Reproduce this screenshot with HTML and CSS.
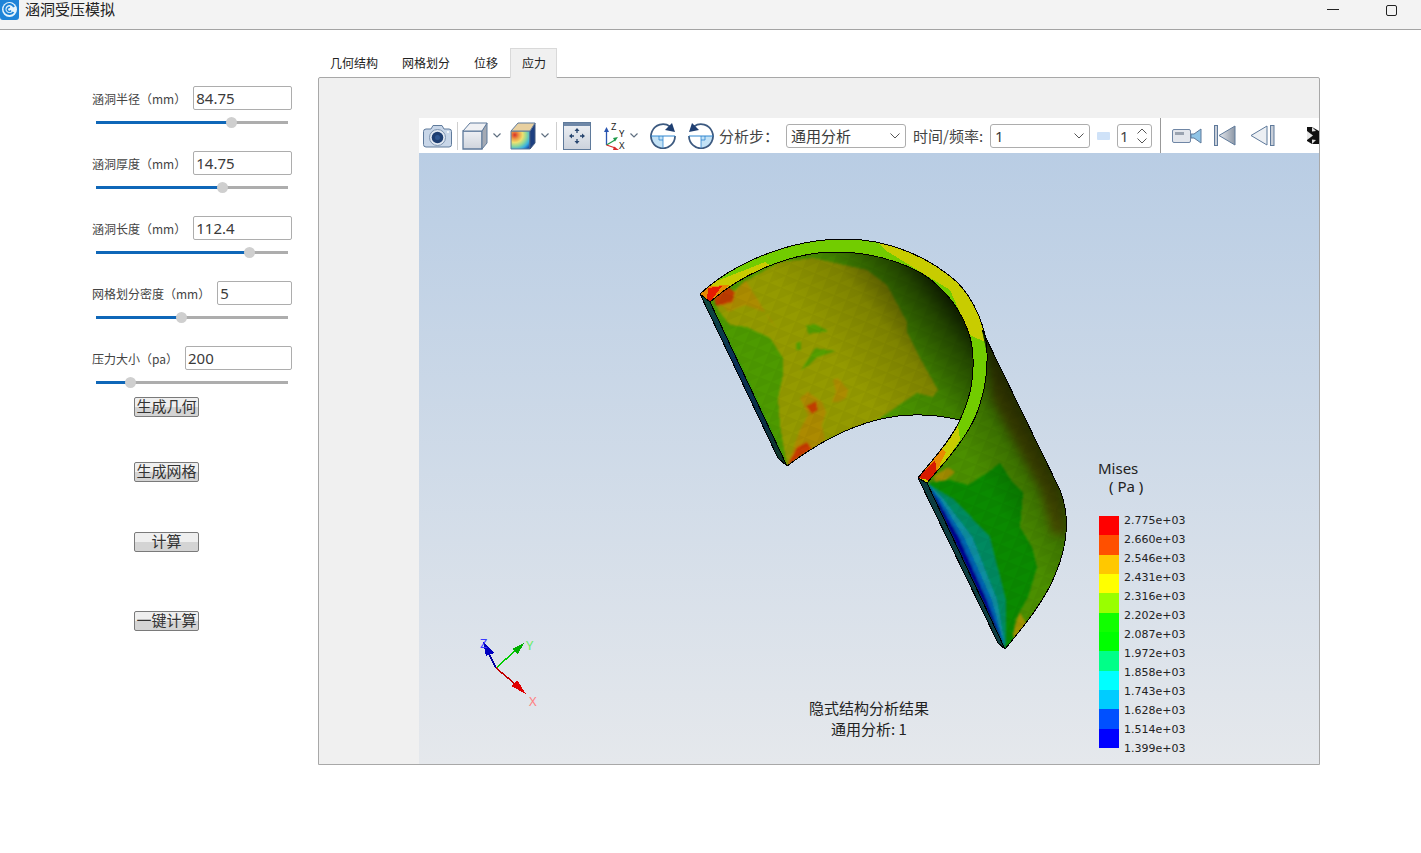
FILE: index.html
```html
<!DOCTYPE html>
<html lang="zh">
<head>
<meta charset="utf-8">
<title>涵洞受压模拟</title>
<link rel="stylesheet" href="styles.css">
</head>
<body>
<header class="titlebar">
  <div class="title-left">
    <svg class="app-icon" width="19" height="20" viewBox="0 0 19 20"><rect x="0" y="-4" width="19" height="24" rx="3" fill="#1f84d8"/><circle cx="9.500" cy="9.500" r="7.500" fill="#e6f4fc"/><path d="M13.500 12a5 5 0 1 1 .5-5" fill="none" stroke="#1f84d8" stroke-width="2"/><path d="M11 10.500a2 2 0 1 1-1-3" fill="none" stroke="#1f84d8" stroke-width="1.500"/></svg>
    <span class="app-title">涵洞受压模拟</span>
  </div>
  <div class="win-controls">
    <span class="win-min"></span>
    <span class="win-max"></span>
  </div>
</header>
<main class="main">
  <aside class="sidebar">
    <div class="param">
      <div class="param-head"><label class="param-label">涵洞半径（mm）</label><div class="field">84.75</div></div>
      <div class="slider"><div class="slider-fill" style="width:70.8%"></div><div class="slider-thumb" style="left:70.8%"></div></div>
    </div>
    <div class="param">
      <div class="param-head"><label class="param-label">涵洞厚度（mm）</label><div class="field">14.75</div></div>
      <div class="slider"><div class="slider-fill" style="width:66.1%"></div><div class="slider-thumb" style="left:66.1%"></div></div>
    </div>
    <div class="param">
      <div class="param-head"><label class="param-label">涵洞长度（mm）</label><div class="field">112.4</div></div>
      <div class="slider"><div class="slider-fill" style="width:79.7%"></div><div class="slider-thumb" style="left:79.7%"></div></div>
    </div>
    <div class="param">
      <div class="param-head"><label class="param-label">网格划分密度（mm）</label><div class="field">5</div></div>
      <div class="slider"><div class="slider-fill" style="width:44.3%"></div><div class="slider-thumb" style="left:44.3%"></div></div>
    </div>
    <div class="param param-last">
      <div class="param-head"><label class="param-label">压力大小（pa）</label><div class="field">200</div></div>
      <div class="slider"><div class="slider-fill" style="width:18.2%"></div><div class="slider-thumb" style="left:18.2%"></div></div>
    </div>
    <button class="btn btn-geo">生成几何</button>
    <button class="btn btn-mesh">生成网格</button>
    <button class="btn btn-calc">计算</button>
    <button class="btn btn-all">一键计算</button>
  </aside>

  <section class="workspace">
    <nav class="tabs">
      <span class="tab">几何结构</span>
      <span class="tab">网格划分</span>
      <span class="tab">位移</span>
      <span class="tab tab-active">应力</span>
    </nav>
    <div class="pane">
      <div class="viewer">
        <div class="toolbar">
          <svg class="ti ti-camera" width="29" height="24" viewBox="0 0 29 24"><path d="M3 5h5l2-3.500h9L21 5h5q2.500 0 2.500 2.500v13q0 2.500-2.500 2.500H3Q.5 23 .5 20.500v-13Q.5 5 3 5z" fill="#c8d6e8" stroke="#5f7a9b"/><circle cx="14.500" cy="13.500" r="8" fill="#e3eaf3" stroke="#7d93af"/><circle cx="14.500" cy="13.500" r="5.800" fill="#1f3f72"/><circle cx="14.500" cy="13.500" r="2.500" fill="#2f5690"/><circle cx="25" cy="8" r="1" fill="#fff"/></svg>
          <span class="tsep tsep-a"></span>
          <svg class="ti ti-cube" width="26" height="28" viewBox="0 0 26 28"><defs><linearGradient id="cf" x1="0" y1="0" x2="0" y2="1"><stop offset="0" stop-color="#eef0f4"/><stop offset="1" stop-color="#cfd4dc"/></linearGradient></defs><path d="M1 9h19v18H1z" fill="url(#cf)" stroke="#5f7a9b" stroke-width="1.300"/><path d="M20 9v18l5-6V1z" fill="#a4aab4" stroke="#5f7a9b"/><path d="M1 9 8 1h17l-5 8z" fill="#f0f1f4" stroke="#5f7a9b"/></svg>
          <svg class="ti ti-chev-a" width="8" height="5" viewBox="0 0 8 5"><path d="M.5.5 4 4 7.500.5" fill="none" stroke="#5f6f80" stroke-width="1.200"/></svg>
          <svg class="ti ti-ccube" width="26" height="28" viewBox="0 0 26 28"><defs><radialGradient id="cg" cx=".2" cy=".22" r="1"><stop offset="0" stop-color="#d8322a"/><stop offset=".22" stop-color="#ee9a45"/><stop offset=".42" stop-color="#eee070"/><stop offset=".62" stop-color="#8fd89a"/><stop offset=".82" stop-color="#3ab0e0"/><stop offset="1" stop-color="#1d55b0"/></radialGradient></defs><path d="M1 9h19v18H1z" fill="url(#cg)" stroke="#5f7a9b"/><path d="M20 9v18l5-6V1z" fill="#1d3f80" stroke="#40587f"/><path d="M1 9 8 1h17l-5 8z" fill="#e8d0a0" stroke="#5f7a9b"/></svg>
          <svg class="ti ti-chev-b" width="8" height="5" viewBox="0 0 8 5"><path d="M.5.5 4 4 7.500.5" fill="none" stroke="#5f6f80" stroke-width="1.200"/></svg>
          <span class="tsep tsep-b"></span>
          <svg class="ti ti-fit" width="28" height="28" viewBox="0 0 28 28"><defs><linearGradient id="ff" x1="0" y1="0" x2="0" y2="1"><stop offset="0" stop-color="#eef1f5"/><stop offset="1" stop-color="#ccd2dc"/></linearGradient></defs><rect x=".5" y=".5" width="27" height="27" fill="url(#ff)" stroke="#5f7a9b"/><rect x="1" y="1" width="26" height="3" fill="#6f88a8"/><path d="M14 11V8M14 17v3M11 14H8M17 14h3" stroke="#27456f" stroke-width="1.300"/><path d="M14 6l-2.500 3h5zM14 22l-2.500-3h5zM6 14l3-2.500v5zM22 14l-3-2.500v5z" fill="#27456f"/></svg>
          <svg class="ti ti-axes" width="24" height="34" viewBox="0 -2 24 34"><path d="M3.500 24V10" stroke="#2a55b0" stroke-width="1.300"/><path d="M3.500 6 1 11h5z" fill="#2a55b0"/><path d="M3.500 24 12 19" stroke="#1f9a4a" stroke-width="1.300"/><path d="M15 16l-5 1 2 3.500z" fill="#1f9a4a"/><path d="M3.500 24l9 3" stroke="#d92a2a" stroke-width="1.300"/><path d="M16 29l-5-3.500-1 3.500z" fill="#d92a2a"/><text class="axis-letter" x="8" y="8.500">Z</text><text class="axis-letter" x="16" y="16">Y</text><text class="axis-letter" x="16" y="28">X</text></svg>
          <svg class="ti ti-chev-c" width="8" height="5" viewBox="0 0 8 5"><path d="M.5.5 4 4 7.500.5" fill="none" stroke="#5f6f80" stroke-width="1.200"/></svg>
          <svg class="ti ti-rot-a" width="26" height="26" viewBox="0 0 26 26"><path d="M13 13H1A12 12 0 0 0 13 25z" fill="#c3e2f6"/><path d="M20 3.500A12 12 0 1 0 25 13" fill="none" stroke="#3d5a80" stroke-width="1.800"/><path d="M25 9 15 7l7-7z" fill="#1f3f72"/><path d="M1 13h24" stroke="#2f86d0"/><path d="M13 13v12M13 17H9v-4" fill="none" stroke="#2f86d0" stroke-width=".8"/></svg>
          <svg class="ti ti-rot-b" width="26" height="26" viewBox="0 0 26 26"><path d="M13 13h12A12 12 0 0 1 13 25z" fill="#c3e2f6"/><path d="M6 3.500A12 12 0 1 1 1 13" fill="none" stroke="#3d5a80" stroke-width="1.800"/><path d="M1 9l10-2-7-7z" fill="#1f3f72"/><path d="M1 13h24" stroke="#2f86d0"/><path d="M13 13v12M13 17h4v-4" fill="none" stroke="#2f86d0" stroke-width=".8"/></svg>
          <span class="tlabel tlabel-step">分析步：</span>
          <div class="combo combo-step"><span>通用分析</span><svg width="10" height="6" viewBox="0 0 10 6"><path d="M.5.5 5 5 9.500.5" fill="none" stroke="#555"/></svg></div>
          <span class="tlabel tlabel-time">时间/频率:</span>
          <div class="combo combo-time"><span>1</span><svg width="10" height="6" viewBox="0 0 10 6"><path d="M.5.5 5 5 9.500.5" fill="none" stroke="#555"/></svg></div>
          <span class="mini-bar"></span>
          <div class="spin"><span>1</span><span class="spin-arrows"><svg width="10" height="6" viewBox="0 0 10 6"><path d="M.5 5.500 5 1l4.500 4.500" fill="none" stroke="#555"/></svg><svg width="10" height="6" viewBox="0 0 10 6"><path d="M.5.5 5 5 9.500.5" fill="none" stroke="#555"/></svg></span></div>
          <span class="tsep-full"></span>
          <svg class="ti ti-video" width="30" height="16" viewBox="0 0 30 16"><rect x=".5" y="1.500" width="18" height="13" rx="1.500" fill="#e3e6ec" stroke="#6f86a5"/><rect x="3" y="4" width="9" height="3" fill="#9aa3b0"/><path d="M19 6h3l7-5v14l-7-5h-3z" fill="#8fc4e6" stroke="#5f7a9b"/></svg>
          <svg class="ti ti-first" width="22" height="21" viewBox="0 0 22 21"><defs><linearGradient id="fg" x1="0" y1="0" x2="1" y2="0"><stop offset="0" stop-color="#e6e9ee"/><stop offset="1" stop-color="#8c97a6"/></linearGradient></defs><rect x=".5" y=".5" width="3" height="20" fill="#c8ced8" stroke="#5f7a9b"/><path d="M21 1v19L5 10.500z" fill="url(#fg)" stroke="#5f7a9b"/></svg>
          <svg class="ti ti-prev" width="25" height="21" viewBox="0 0 25 21"><path d="M17 1v19L1 10.500z" fill="#eceff3" stroke="#5f7a9b"/><rect x="20.500" y=".5" width="3.500" height="20" fill="#c8ced8" stroke="#5f7a9b"/></svg>
          <svg class="ti ti-play" width="12" height="17" viewBox="0 0 12 17"><path d="M0 0h5l7 4v13H5L0 14z" fill="#111"/><path d="M0 4l6 4.500L0 13z" fill="#e6e6e6"/><path d="M5 0l4 4-4 .5z" fill="#ddd"/><path d="M5 17l4-4-4-.5z" fill="#ddd"/></svg>
        </div>
        <div class="canvas">
          <svg class="scene" width="900" height="611" viewBox="419 153 900 611">
            <defs>
              <clipPath id="clip-in"><path d="M710 302C740 275 790 252 835 252C880 252 920 268 937 285C960 305 973 335 973 358C974 385 968 402 960 420C930 413 900 414 877 420C845 428 815 445 787 466Z"/></clipPath>
              <clipPath id="clip-ring"><path d="M700 294C730 266 785 239 845 239C890 239 930 258 957 282C975 300 987 330 987 353C988 380 982 398 978 410C972 428 955 450 945 462L927 483L918 478C930 462 950 442 960 420C968 402 974 385 973 358C973 335 960 305 937 285C920 268 880 252 835 252C790 252 740 275 710 302Z"/></clipPath>
              <clipPath id="clip-out"><path d="M982 330L1060 490C1070 515 1068 545 1055 575C1045 600 1025 625 1005 649L927 483L945 462C955 450 972 428 978 410C982 398 988 380 987 353Z"/></clipPath>
              <linearGradient id="shade-in" gradientUnits="userSpaceOnUse" x1="860" y1="390" x2="975" y2="300"><stop offset="0" stop-color="#000" stop-opacity="0"/><stop offset=".4" stop-color="#000" stop-opacity=".15"/><stop offset=".72" stop-color="#000" stop-opacity=".55"/><stop offset=".9" stop-color="#000" stop-opacity=".88"/><stop offset="1" stop-color="#000" stop-opacity=".95"/></linearGradient>
              <linearGradient id="shade-out" gradientUnits="userSpaceOnUse" x1="975" y1="470" x2="1040" y2="430"><stop offset="0" stop-color="#000" stop-opacity="0"/><stop offset=".5" stop-color="#000" stop-opacity=".2"/><stop offset="1" stop-color="#000" stop-opacity=".62"/></linearGradient>
              <linearGradient id="strip-l" gradientUnits="userSpaceOnUse" x1="700" y1="294" x2="787" y2="466"><stop offset="0" stop-color="#0d4a3a"/><stop offset=".4" stop-color="#0a2f58"/><stop offset=".75" stop-color="#0a2f44"/><stop offset="1" stop-color="#103a20"/></linearGradient>
              <pattern id="facets" width="13" height="13" patternUnits="userSpaceOnUse" patternTransform="rotate(22)"><path d="M0 0h13L0 13z" fill="#000" opacity=".035"/></pattern>
              <filter id="soft" x="-5%" y="-5%" width="110%" height="110%"><feGaussianBlur stdDeviation=".9"/></filter>
              <filter id="softer" x="-10%" y="-10%" width="120%" height="120%"><feGaussianBlur stdDeviation="5"/></filter>
            </defs>

            <path d="M700 294L710 302L787 466L778 458Z" fill="url(#strip-l)"/>

            <g clip-path="url(#clip-in)">
              <rect x="700" y="240" width="280" height="230" fill="#4d9a00"/>
              <g filter="url(#soft)">
                <path d="M712 305L740 365L787 466L772 440L748 385L725 335Z" fill="#0d9a2c"/>
                <path d="M717 305L747 280L780 262L813 258L867 270L887 285L907 322L907 332L920 358L938 390L933 397L917 393L877 420L830 438L787 466L780 425L778 398L783 375L783 358L770 338L747 327L730 325L718 310Z" fill="#949a00"/>
                <path d="M722 306L745 280L758 300L770 320L778 330L765 312L745 305L728 312Z" fill="#ac8c00"/>
                <path d="M787 466L800 430L808 415L800 398L808 392L822 402L826 412L822 425L825 440L805 455Z" fill="#ac8a00"/>
                <path d="M833 380L838 378L848 390L846 398L838 402L832 402L836 392Z" fill="#ac8c00"/>
                <path d="M806 406L816 401L818 410L812 414Z" fill="#c03c00"/>
                <path d="M787 466L797 447L807 442L812 449Z" fill="#c63a00"/>
                <path d="M714 298L728 287L735 292L733 302L722 305L716 306Z" fill="#be3a00"/>
                <path d="M806 325L815 324L827 330L827 332L815 333L808 334Z" fill="#549e00"/>
                <path d="M796 343L801 341L801 350L796 350Z" fill="#549e00"/>
                <path d="M801 370L815 348L837 351L818 357L808 366Z" fill="#549e00"/>
              </g>
              <rect x="700" y="240" width="280" height="230" fill="url(#facets)"/>
              <rect x="700" y="240" width="280" height="230" fill="url(#shade-in)"/>
            </g>

            <g clip-path="url(#clip-ring)">
              <rect x="695" y="235" width="300" height="255" fill="#72cc00"/>
              <path d="M872 236L885 250L950 290L970 335L985 342L1000 342L1000 230Z" fill="#c8cc00"/>
              <path d="M700 294L712 283L765 262L770 265L710 302Z" fill="#c8cc00"/>
              <path d="M700 294L708 286L730 285L710 302Z" fill="#e88a00"/>
              <path d="M708 288L722 286L710 302L707 300Z" fill="#e81a00"/>
              <path d="M975 420L960 450L930 485L950 470L970 440Z" fill="#12b800"/>
              <path d="M940 447L958 425L960 440L945 463L932 480L928 483L918 478Z" fill="#c8cc00"/>
              <path d="M925 470L940 447L946 452L935 475L928 483Z" fill="#e88a00"/>
              <path d="M918 478L935 460L937 473L928 480Z" fill="#d81a00"/>
            </g>

            <g clip-path="url(#clip-out)">
              <rect x="920" y="320" width="160" height="340" fill="#0a8a00"/>
              <g filter="url(#soft)">
                <path d="M927 483L950 480L968 485L987 473L1000 463L1013 483L1023 493L1020 527L1032 547L1037 567L1028 597L1015 620L1013 637L1040 640L1080 560L1070 470L985 325L960 440Z" fill="#4c8f00"/>
                <path d="M934 476L948 468L955 472L945 480L936 482Z" fill="#a08a00"/>
                <path d="M1013 634L1020 613L1026 624L1015 640Z" fill="#a09000"/>
                <path d="M927 483L955 500L990 537L1006 600L1006 640L1005 649Z" fill="#008a60"/>
                <path d="M927 483L944 500L972 537L997 600L1004 640L1005 649Z" fill="#0a8ea0"/>
                <path d="M927 483L941 500L964 537L992 600L1003 640L1005 649Z" fill="#0060b0"/>
                <path d="M927 483L938 500L959 537L987 600L1002 640L1005 649Z" fill="#000090"/>
              </g>
              <path d="M985 330L1062 490L1068 535L1052 535L1040 490L992 400Z" fill="#5a4a00" opacity=".7" filter="url(#softer)"/>
              <rect x="920" y="320" width="160" height="340" fill="url(#facets)"/>
              <rect x="920" y="320" width="160" height="340" fill="url(#shade-out)"/>
            </g>
            <path d="M918 478L927 483L1005 649L998 643Z" fill="#0d3d40"/>

            <g fill="none" stroke="#000" stroke-width="1">
              <path d="M700 294C730 266 785 239 845 239C890 239 930 258 957 282C975 300 987 330 987 353C988 380 982 398 978 410C972 428 955 450 945 462L927 483L918 478C930 462 950 442 960 420C968 402 974 385 973 358C973 335 960 305 937 285C920 268 880 252 835 252C790 252 740 275 710 302Z"/>
              <path d="M960 420C930 413 900 414 877 420C845 428 815 445 787 466L778 458L700 294M710 302L787 466"/>
              <path d="M982 330L1060 490C1070 515 1068 545 1055 575C1045 600 1025 625 1005 649L998 643L918 478M927 483L1005 649"/>
            </g>

            <g class="triad">
              <path d="M496 668L487 650" stroke="#0000a0" stroke-width="1.500"/>
              <path d="M483 642L494 653L486 656Z" fill="#0000c0"/>
              <path d="M496 668L516 650" stroke="#00cc00" stroke-width="1.500"/>
              <path d="M524 643L518 654L512 649Z" fill="#00b000"/>
              <path d="M496 668L514 683" stroke="#c00000" stroke-width="1.500"/>
              <path d="M526 694L511 686L517 680Z" fill="#e00000"/>
              <text class="triad-z" x="480" y="648">Z</text>
              <text class="triad-y" x="526" y="650">Y</text>
              <text class="triad-x" x="529" y="706">X</text>
            </g>
          </svg>
          <div class="legend">
            <div class="legend-title">Mises</div>
            <div class="legend-unit">( Pa )</div>
            <div class="legend-body">
              <div class="swatches">
                <span class="sw sw1"></span><span class="sw sw2"></span><span class="sw sw3"></span><span class="sw sw4"></span><span class="sw sw5"></span><span class="sw sw6"></span><span class="sw sw7"></span><span class="sw sw8"></span><span class="sw sw9"></span><span class="sw sw10"></span><span class="sw sw11"></span><span class="sw sw12"></span>
              </div>
              <div class="values">
                <span>2.775e+03</span><span>2.660e+03</span><span>2.546e+03</span><span>2.431e+03</span><span>2.316e+03</span><span>2.202e+03</span><span>2.087e+03</span><span>1.972e+03</span><span>1.858e+03</span><span>1.743e+03</span><span>1.628e+03</span><span>1.514e+03</span><span>1.399e+03</span>
              </div>
            </div>
          </div>
          <div class="caption">
            <div>隐式结构分析结果</div>
            <div>通用分析: 1</div>
          </div>
        </div>
      </div>
    </div>
  </section>
</main>
</body>
</html>
```
FILE: styles.css
```css
* { box-sizing: border-box; }
html, body { margin: 0; padding: 0; }
body {
  width: 1421px;
  height: 853px;
  overflow: hidden;
  background: #fff;
  color: #333;
  font-family: "Noto Sans", "Noto Sans CJK SC", sans-serif;
}
svg { display: block; flex: none; }

.titlebar {
  height: 30px;
  display: flex;
  justify-content: space-between;
  background: #f3f3f3;
  border-bottom: 1px solid #a3a3a3;
}
.title-left { display: flex; align-items: flex-start; }
.app-title { margin-left: 6px; font-size: 15px; line-height: 18px; color: #222; font-family: "Noto Sans CJK SC", sans-serif; }
.win-controls { display: flex; align-items: flex-start; }
.win-min { width: 12px; height: 1px; margin-top: 9px; background: #222; }
.win-max { width: 11px; height: 11px; margin: 5px 24px 0 47px; border: 1.500px solid #222; border-radius: 2px; }

.main { display: flex; align-items: flex-start; }
.sidebar { width: 318px; padding: 56px 0 0 92px; display: flex; flex-direction: column; align-items: flex-start; flex: none; }
.param { width: 200px; height: 65px; }
.param-last { height: 42px; }
.param-head { display: flex; align-items: center; gap: 7px; height: 24px; }
.param-label { font-size: 12px; white-space: nowrap; color: #444; font-family: "Noto Sans CJK SC", sans-serif; }
.field {
  flex: 1;
  height: 24px;
  border: 1px solid #adadad;
  border-radius: 2px;
  padding-left: 2px;
  font-size: 15px;
  line-height: 22px;
  color: #3a3a3a;
}
.slider { position: relative; width: 192px; height: 3px; margin: 11px 0 0 4px; background: #adadad; }
.slider-fill { height: 3px; background: #0f67b8; }
.slider-thumb { position: absolute; top: -4px; width: 11px; height: 11px; margin-left: -5.500px; border-radius: 50%; background: #cfcfcf; }

.btn {
  width: 65px;
  height: 20px;
  margin-left: 42px;
  padding: 0 0 2px;
  border: 1px solid #7a7a7a;
  border-radius: 2px;
  background: linear-gradient(#efefef 50%, #d4d4d4 50%);
  color: #333;
  font-family: "Noto Sans CJK SC", sans-serif;
  font-size: 15px;
  line-height: 16px;
  overflow: visible;
  white-space: nowrap;
}
.btn-geo { margin-top: 9px; }
.btn-mesh { margin-top: 45px; }
.btn-calc { margin-top: 50px; }
.btn-all { margin-top: 59px; }

.workspace { padding-top: 18px; }
.tabs { display: flex; height: 30px; align-items: stretch; }
.tab { padding: 0 12px; font-size: 12px; line-height: 30px; color: #222; white-space: nowrap; font-family: "Noto Sans CJK SC", sans-serif; }
.tab-active { background: #f0f0f0; border: 1px solid #d9d9d9; border-bottom: 0; padding: 0 10px 0 11px; line-height: 28px; width: 47px; }

.pane {
  width: 1002px;
  height: 688px;
  border: 1px solid #a8a8a8;
  border-radius: 2px 2px 0 0;
  background: #f0f0f0;
  padding: 40px 0 0 100px;
  margin-top: -1px;
}
.viewer { width: 900px; height: 646px; display: flex; flex-direction: column; }

.toolbar {
  height: 35px;
  flex: none;
  display: flex;
  align-items: center;
  background: #fff;
  overflow: hidden;
  color: #444;
}
.ti-camera { margin-left: 4px; }
.tsep { width: 1px; height: 28px; background: #cfcfcf; flex: none; }
.tsep-a { margin-left: 5px; }
.ti-cube { margin-left: 4px; }
.ti-chev-a { margin-left: 5px; }
.ti-ccube { margin-left: 9px; }
.ti-chev-b { margin-left: 5px; }
.tsep-b { margin-left: 7px; }
.ti-fit { margin-left: 6px; }
.ti-axes { margin-left: 12px; }
.axis-letter { font-size: 9.500px; fill: #222; font-family: "Noto Sans", sans-serif; }
.ti-chev-c { margin-left: 3px; }
.ti-rot-a { margin-left: 12px; }
.ti-rot-b { margin-left: 12px; }
.tlabel { font-size: 15px; white-space: nowrap; flex: none; font-family: "Noto Sans CJK SC", sans-serif; }
.tlabel-step { margin-left: 5px; width: 60px; }
.tlabel-time { margin-left: 7px; width: 70px; }
.combo {
  height: 24px;
  flex: none;
  display: flex;
  align-items: center;
  justify-content: space-between;
  border: 1px solid #adadad;
  border-radius: 3px;
  padding: 0 5px 0 4px;
  font-size: 15px;
  color: #3a3a3a;
  font-family: "Noto Sans", "Noto Sans CJK SC", sans-serif;
}
.combo-step { margin-left: 7px; width: 120px; }
.combo-time { margin-left: 7px; width: 100px; }
.mini-bar { width: 13px; height: 8px; margin-left: 7px; background: #cfe2f8; border-radius: 1px; flex: none; }
.spin {
  width: 35px;
  height: 24px;
  margin-left: 7px;
  flex: none;
  display: flex;
  align-items: center;
  justify-content: space-between;
  border: 1px solid #adadad;
  border-radius: 3px;
  padding: 0 4px 0 2px;
  font-size: 15px;
}
.spin-arrows { display: flex; flex-direction: column; gap: 4px; }
.tsep-full { width: 1px; height: 35px; margin-left: 8px; background: #999; flex: none; }
.ti-video { margin-left: 11px; }
.ti-first { margin-left: 12px; }
.ti-prev { margin-left: 14px; }
.ti-play { margin-left: 32px; }

.canvas {
  position: relative;
  flex: 1;
  background: linear-gradient(#b9cde4, #e5e8ec);
}
.scene { shape-rendering: crispEdges; }
.triad text { font-size: 13px; font-family: "Noto Sans", sans-serif; }
.triad-z { fill: #3a3aff; }
.triad-y { fill: #66ee66; }
.triad-x { fill: #ff8080; }

.legend { position: absolute; left: 679px; top: 306px; color: #222; font-family: "DejaVu Sans", sans-serif; }
.legend-title { font-size: 15px; line-height: 19px; font-family: "Noto Sans", sans-serif; }
.legend-unit { font-size: 15px; line-height: 18px; margin-top: -1px; margin-left: 11px; white-space: pre; font-family: "Noto Sans", sans-serif; }
.legend-body { display: flex; gap: 5px; margin-top: 16px; }
.swatches { width: 20px; margin: 5px 0 0 1px; display: flex; flex-direction: column; }
.sw { height: 19.330px; display: block; }
.sw1 { background: #ff0000; }
.sw2 { background: #ff5000; }
.sw3 { background: #ffc800; }
.sw4 { background: #ffff00; }
.sw5 { background: #99ff00; }
.sw6 { background: #11ff00; }
.sw7 { background: #00ff00; }
.sw8 { background: #00ff88; }
.sw9 { background: #00ffff; }
.sw10 { background: #00ccff; }
.sw11 { background: #0050ff; }
.sw12 { background: #0000ff; }
.values { display: flex; flex-direction: column; font-size: 11px; line-height: 19px; white-space: nowrap; }

.caption {
  position: absolute;
  left: 340px;
  top: 544px;
  width: 220px;
  text-align: center;
  font-size: 15px;
  line-height: 21px;
  color: #222;
  font-family: "Noto Sans CJK SC", sans-serif;
}
```
